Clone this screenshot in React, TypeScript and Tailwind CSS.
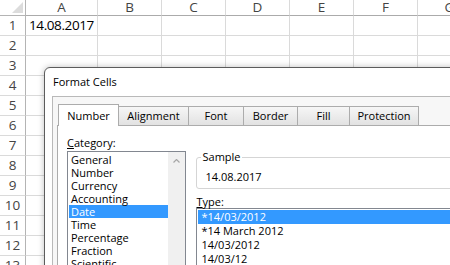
const columns = ["A", "B", "C", "D", "E", "F", "G"];
const rows = Array.from({ length: 13 }, (_, i) => i + 1);

const tabs = [
  { label: "Number", width: "w-[61px]", active: true },
  { label: "Alignment", width: "w-[71px]" },
  { label: "Font", width: "w-[56px]" },
  { label: "Border", width: "w-[55px]" },
  { label: "Fill", width: "w-[53px]" },
  { label: "Protection", width: "w-[70px]" },
];

const categories = ["General", "Number", "Currency", "Accounting", "Date", "Time", "Percentage", "Fraction", "Scientific"];
const types = ["*14/03/2012", "*14 March 2012", "14/03/2012", "14/03/12", "14-3"];

function Sheet() {
  return (
    <div className="grid grid-cols-[26px_72px_64px_64px_64px_64px_64px_64px] grid-rows-[16px_repeat(13,20px)] font-['Open_Sans',sans-serif] text-[13.5px] text-[#444]">
      <div className="relative border-b border-r border-[#b4b4b4]">
        <svg className="absolute left-0 top-0" width="25" height="15" viewBox="0 0 25 15">
          <polygon points="23,2 23,13 12,13" fill="#dcdcdc" />
        </svg>
      </div>
      {columns.map((col) => (
        <div key={col} className="flex items-center justify-center border-b border-r border-b-[#ababab] border-r-[#dadada] leading-[15px]">
          {col}
        </div>
      ))}
      {rows.map((row) => (
        <div key={row} className="contents">
          <div className="flex items-center justify-center border-b border-r border-b-[#dadada] border-r-[#b4b4b4] leading-[19px]">{row}</div>
          {columns.map((col) => (
            <div key={col} className="flex items-center border-b border-r border-[#dadada] pl-[3px] leading-[19px] tracking-[-0.4px] text-black">
              {row === 1 && col === "A" ? "14.08.2017" : ""}
            </div>
          ))}
        </div>
      ))}
    </div>
  );
}

function FormatCellsDialog() {
  return (
    <div className="absolute left-[44px] top-[67px] h-[220px] w-[430px] rounded-tl-[6px] border border-[#5c5c5c] bg-white pl-[7px] font-['Open_Sans',sans-serif] text-[11px] text-black shadow-[0_0_6px_rgba(0,0,0,0.25)]">
      <div className="h-[28px] pl-[1px] pt-[7px] leading-[14px]">Format Cells</div>
      <div className="h-full border-l border-t border-[#b9b9b9] bg-[#f7f7f7] pt-[7px]">
        <div className="flex h-[21px] items-end pl-[5px]">
          {tabs.map((tab, i) =>
            tab.active ? (
              <div
                key={tab.label}
                className={`${tab.width} relative z-10 -mb-px flex h-[22px] items-start justify-center border border-b-0 border-[#acacac] bg-white pt-[4px] leading-[14px]`}
              >
                {tab.label}
              </div>
            ) : (
              <div
                key={tab.label}
                className={`${tab.width} ${i > 0 ? "-ml-px" : ""} flex h-[19px] items-center justify-center border border-b-0 border-[#acacac] bg-gradient-to-b from-[#f6f6f6] to-[#e2e2e2] leading-[14px]`}
              >
                {tab.label}
              </div>
            )
          )}
        </div>
        <div className="ml-[4px] flex h-full gap-[10px] border-l border-t border-[#acacac] bg-white pl-[9px] pt-[10px]">
          <div className="w-[121px]">
            <div className="leading-[14px]">
              <span className="underline">C</span>ategory:
            </div>
            <div className="mt-px flex h-[140px] border border-[#828790]">
              <div className="flex-1 pt-px">
                {categories.map((c) => (
                  <div
                    key={c}
                    className={`ml-px h-[13px] pl-[2px] leading-[13px] ${c === "Date" ? "bg-[#3399ff] text-white" : ""}`}
                  >
                    {c}
                  </div>
                ))}
              </div>
              <div className="w-[17px] bg-[#f0f0f0]">
                <div className="flex h-[17px] items-center justify-center">
                  <svg width="7" height="4" viewBox="0 0 7 4">
                    <polyline points="0.5,3.5 3.5,0.5 6.5,3.5" fill="none" stroke="#a6a6a6" strokeWidth="1.2" />
                  </svg>
                </div>
              </div>
            </div>
          </div>
          <div className="w-[280px]">
            <div className="relative mt-[21px] h-[32px] rounded-[3px] border border-[#d5d5d5] pl-[8px] pt-[12px] leading-[14px]">
              <span className="absolute -top-[8px] left-[4px] bg-white px-px leading-[14px]">Sample</span>
              14.08.2017
            </div>
            <div className="mt-[6px] leading-[13px]">
              <span className="underline">T</span>ype:
            </div>
            <div className="h-[100px] border border-[#828790] pt-px">
              {types.map((t, i) => (
                <div
                  key={t}
                  className={`ml-px flex h-[14px] items-center pl-[3px] ${i === 0 ? "bg-[#3399ff] text-white" : ""}`}
                >
                  {t}
                </div>
              ))}
            </div>
          </div>
        </div>
      </div>
    </div>
  );
}

export default function App() {
  return (
    <div className="relative h-[265px] w-[450px] overflow-hidden bg-white">
      <Sheet />
      <FormatCellsDialog />
    </div>
  );
}
